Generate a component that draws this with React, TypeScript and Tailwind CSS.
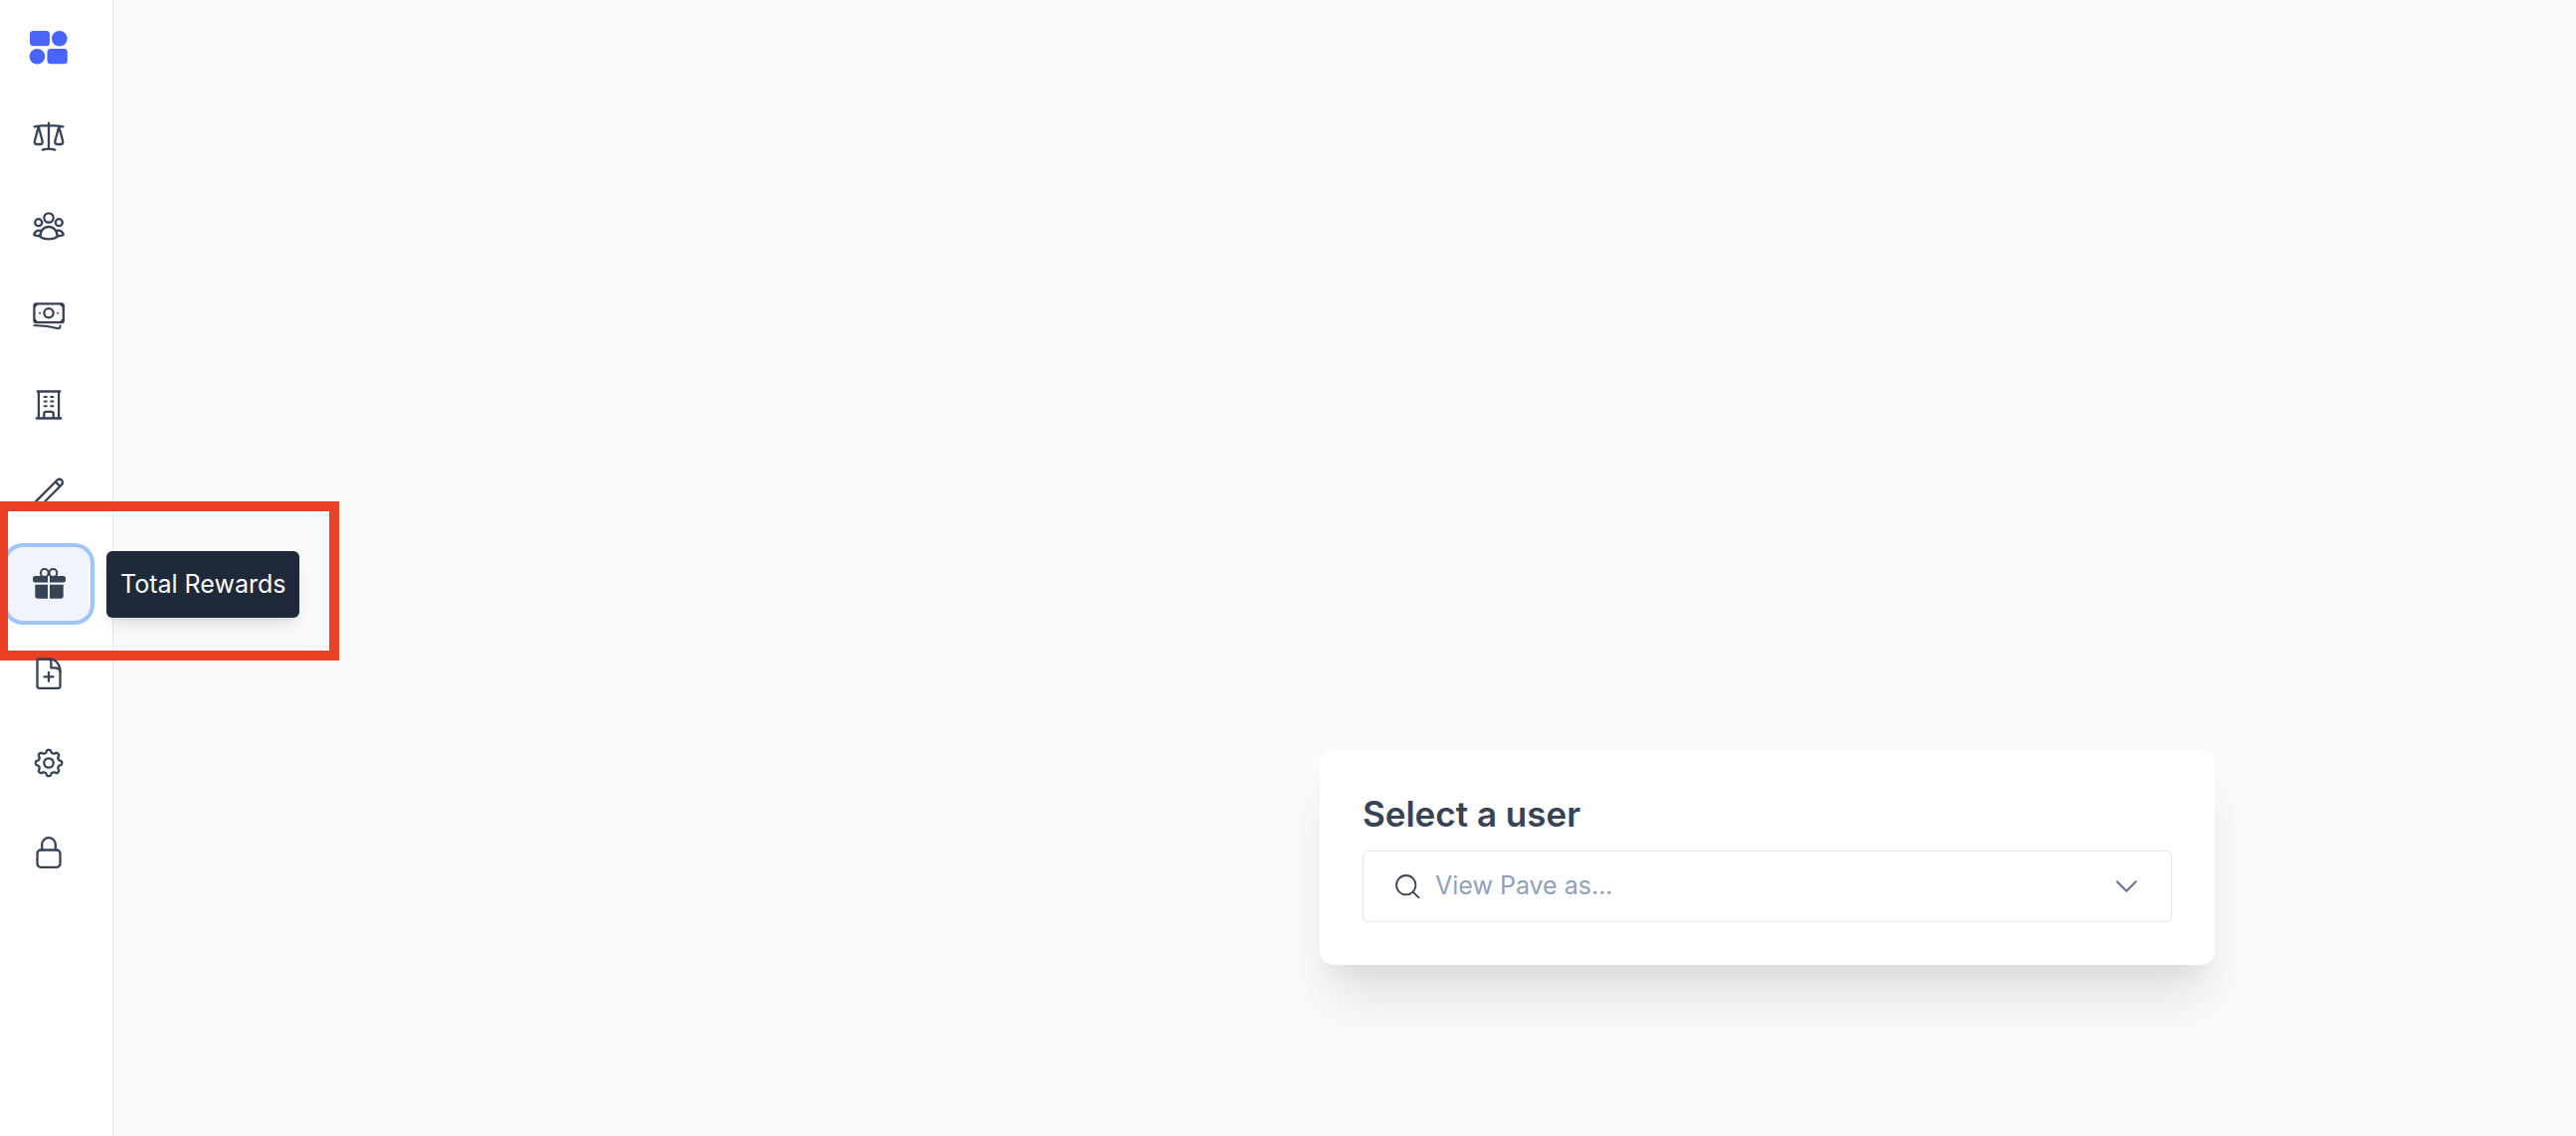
import React from "react";

const gearPath = (() => {
  const pts: string[] = [];
  for (let deg = 0; deg < 360; deg += 3) {
    const a = (deg * Math.PI) / 180;
    const r = 11.8 + 1.5 * Math.tanh(1.8 * Math.cos(8 * a));
    pts.push(`${(20 + r * Math.cos(a)).toFixed(2)} ${(20 + r * Math.sin(a)).toFixed(2)}`);
  }
  return `M${pts.join("L")}Z`;
})();

function Icon({ children }: { children: React.ReactNode }) {
  return (
    <svg
      viewBox="0 0 40 40"
      className="size-10"
      fill="none"
      stroke="currentColor"
      strokeWidth="2.3"
      strokeLinecap="round"
      strokeLinejoin="round"
      aria-hidden="true"
    >
      {children}
    </svg>
  );
}

const items: { label: string; active?: boolean; icon: React.ReactNode }[] = [
  {
    label: "Benchmarks",
    icon: (
      <>
        <path d="M20 6.600V32.500M5.600 10.300Q20 8 34.400 10.300M13.800 33.600Q20 31.600 26.200 33.600" />
        <path d="M9.700 10.300L5.800 25Q5.500 28 8 28H11.500Q14 28 13.700 25ZM30.300 10.300L26.300 25Q26 28 28.500 28H32Q34.500 28 34.200 25Z" />
      </>
    ),
  },
  {
    label: "People",
    icon: (
      <>
        <circle cx="20" cy="12" r="4.700" />
        <circle cx="9.700" cy="16.700" r="3.500" />
        <circle cx="30.300" cy="16.700" r="3.500" />
        <path d="M11.300 31C11.300 25 15 21 20 21S28.700 25 28.700 31Q25 33.400 20 33.400T11.300 31Z" />
        <path d="M12.500 24.900C8.500 23.800 5.400 26 5.400 29.200Q8 30.300 11 30M27.500 24.900C31.500 23.800 34.600 26 34.600 29.200Q32 30.300 29 30" />
      </>
    ),
  },
  {
    label: "Compensation",
    icon: (
      <>
        <rect x="5.400" y="8.400" width="29.400" height="18.800" rx="2" />
        <circle cx="20" cy="17.700" r="4.600" />
        <path d="M11 17.700h.01M29 17.700h.01" strokeWidth="2" />
        <path
          d="M6 11.400V9h2.400Q8.200 11.200 6 11.400ZM34.200 11.400V9h-2.400Q32 11.200 34.200 11.400ZM6 24.200V26.600h2.400Q8.200 24.400 6 24.200ZM34.200 24.200V26.600h-2.400Q32 24.400 34.200 24.200Z"
          fill="currentColor"
          strokeWidth="1"
        />
        <path d="M5.400 30.200Q18 29.900 29.500 33.300Q31.500 33.700 31.500 30.400" strokeWidth="2" />
      </>
    ),
  },
  {
    label: "Company",
    icon: (
      <>
        <path d="M8.700 6.500H31.300M7.700 33.500H32.300M9.900 6.500V33.500M30.100 6.500V33.500M15.300 33.500V29Q15.300 26.800 17.500 26.800H22.500Q24.700 26.800 24.700 29V33.500" />
        <path d="M15.600 12h2.200M22.200 12h2.200M15.600 16.600h2.200M22.200 16.600h2.200M15.600 21.200h2.200M22.200 21.200h2.200" strokeWidth="2" />
      </>
    ),
  },
  {
    label: "Planning",
    icon: (
      <>
        <path d="M7 27.100L28.400 5.700A3.250 3.250 0 0 1 33 10.300L11.600 31.700L5 34Z" />
        <path d="M26.900 7.500L31.300 11.900" />
      </>
    ),
  },
  {
    label: "Total Rewards",
    active: true,
    icon: (
      <>
        <g stroke="none" fill="currentColor">
          <path d="M19 12V18.500H6.500Q4 18.500 4 16V14.500Q4 12 6.500 12ZM21 12V18.500H34.500Q37 18.500 37 16V14.500Q37 12 34.500 12ZM19 20.700V34.700H9Q6.300 34.700 6.300 32V20.700ZM21 20.700V34.700H32Q34.700 34.700 34.700 32V20.700Z" />
        </g>
        <g strokeWidth="2">
          <circle cx="15.800" cy="9" r="3.900" />
          <circle cx="24.400" cy="9" r="3.900" />
        </g>
      </>
    ),
  },
  {
    label: "Offers",
    icon: (
      <>
        <path d="M21 5.500H10.500Q8.500 5.500 8.500 7.500V32.800Q8.500 34.800 10.500 34.800H29.500Q31.500 34.800 31.500 32.800V18C31.500 11 27 5.500 21 5.500" />
        <path d="M20 18.800v9M15.500 23.300h9M21 5.500Q22.400 6.800 22.400 9.500V14.400H26.500Q30.500 14.600 31.500 18" />
      </>
    ),
  },
  {
    label: "Settings",
    icon: (
      <>
        <path d={gearPath} />
        <circle cx="20" cy="20" r="4.700" />
      </>
    ),
  },
  {
    label: "Admin",
    icon: (
      <>
        <rect x="8.500" y="17.500" width="23" height="17.300" rx="3.500" />
        <path d="M13.200 17.500V12A6.800 6.800 0 0 1 26.800 12V17.500" />
      </>
    ),
  },
];

function Sidebar() {
  return (
    <nav
      aria-label="Main"
      className="flex w-[114px] shrink-0 flex-col border-r border-gray-200 bg-white pt-[6px] pl-[7px]"
    >
      <a href="#" aria-label="Home" className="flex h-[82px] w-[84px] items-center justify-center">
        <svg viewBox="0 0 40 40" className="size-10" fill="#4865f8" aria-hidden="true">
          <rect x="1" y="4" width="20" height="15.300" rx="3.500" />
          <circle cx="30.800" cy="11.700" r="7.800" />
          <circle cx="8.400" cy="29.700" r="7.800" />
          <rect x="18.500" y="22" width="20.300" height="15.200" rx="3.500" />
        </svg>
      </a>
      <ul className="mt-2 flex flex-col gap-2">
        {items.map((item) => (
          <li key={item.label} className="relative">
            <button
              type="button"
              aria-label={item.label}
              className={
                item.active
                  ? "my-1 flex h-[74px] w-[84px] items-center justify-center rounded-2xl bg-[#f1f5fb] text-[#374255] ring-4 ring-[#9ec5fb]"
                  : "flex h-[82px] w-[84px] items-center justify-center text-[#374255]"
              }
            >
              <Icon>{item.icon}</Icon>
            </button>
            {item.active && (
              <>
                <div
                  role="tooltip"
                  className="absolute top-2 left-[100px] rounded-md bg-[#1f2939] px-3.5 pt-[15px] pb-4 text-[25px] leading-9 whitespace-nowrap text-white shadow-lg"
                >
                  {item.label}
                </div>
                <div className="pointer-events-none absolute top-[-42px] left-[-9px] h-40 w-[343px] border-10 border-[#ea4025]" />
              </>
            )}
          </li>
        ))}
      </ul>
    </nav>
  );
}

function UserPicker() {
  return (
    <section className="w-[900px] rounded-[14px] bg-white px-[43px] pt-10 pb-[43px] shadow-[0_40px_50px_-10px_rgba(0,0,0,0.1),0_20px_20px_-10px_rgba(0,0,0,0.04)]">
      <label htmlFor="user" className="block text-[35px] leading-12 font-semibold text-[#374255]">
        Select a user
      </label>
      <div className="mt-[13px] flex h-[72px] items-center rounded-md border border-slate-200 px-[29px]">
        <svg
          viewBox="0 0 28 28"
          className="size-7 shrink-0 text-[#374255]"
          fill="none"
          stroke="currentColor"
          strokeWidth="1.8"
          strokeLinecap="round"
          aria-hidden="true"
        >
          <circle cx="13.700" cy="12.700" r="9.700" />
          <path d="M20.600 19.600L26.500 25.300" />
        </svg>
        <input
          id="user"
          type="text"
          placeholder="View Pave as..."
          className="ml-[15px] min-w-0 flex-1 bg-transparent text-[25px] text-[#374255] outline-none placeholder:text-slate-400"
        />
        <button type="button" aria-label="Show users" className="flex size-8 items-center justify-center text-slate-500">
          <svg
            viewBox="0 0 24 24"
            className="size-6"
            fill="none"
            stroke="currentColor"
            strokeWidth="2"
            strokeLinecap="round"
            strokeLinejoin="round"
            aria-hidden="true"
          >
            <path d="M2.500 7.300L12 16.700L21.500 7.300" />
          </svg>
        </button>
      </div>
    </section>
  );
}

export default function App() {
  return (
    <div className="flex min-h-screen bg-[#f9fafc] font-['Inter',sans-serif]">
      <Sidebar />
      <main className="flex flex-1 items-end justify-end pr-[363px] pb-[172px]">
        <UserPicker />
      </main>
    </div>
  );
}
